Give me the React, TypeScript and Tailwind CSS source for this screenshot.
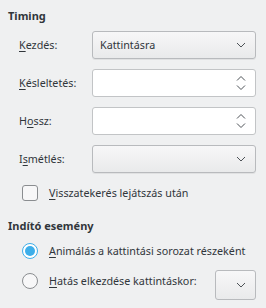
import type { ReactNode } from "react";

function ChevronDown() {
  return (
    <svg width="10" height="6" viewBox="0 0 10 6" fill="none" stroke="#4d5257" strokeWidth="1">
      <path d="M1 1l4 4 4-4" />
    </svg>
  );
}

function SpinArrows() {
  return (
    <svg width="10" height="16" viewBox="0 0 10 16" fill="none" stroke="#4d5257" strokeWidth="1">
      <path d="M1 5.5l4-4 4 4" />
      <path d="M1 10.5l4 4 4-4" />
    </svg>
  );
}

function Mn({ k, rest, pre = "" }: { k: string; rest: string; pre?: string }) {
  return (
    <span>
      {pre}
      <span className="underline underline-offset-2">{k}</span>
      {rest}
    </span>
  );
}

function Row({ label, children }: { label: ReactNode; children: ReactNode }) {
  return (
    <div className="flex h-7 items-center">
      <div className="w-[92px] shrink-0 whitespace-nowrap pl-[19px]">{label}</div>
      {children}
    </div>
  );
}

function Combo({ value = "" }: { value?: string }) {
  return (
    <div className="flex h-7 w-[164px] shrink-0 items-center justify-between rounded-[3px] border border-[#b8babd] bg-gradient-to-b from-[#f7f7f8] to-[#e9eaeb] pl-[7px] pr-[9px] shadow-[0_1px_0_rgba(0,0,0,0.06)]">
      <span>{value}</span>
      <ChevronDown />
    </div>
  );
}

function Spin() {
  return (
    <div className="flex h-7 w-[164px] shrink-0 items-center justify-end rounded-[3px] border border-[#c2c4c6] bg-white pr-[9px]">
      <SpinArrows />
    </div>
  );
}

export default function App() {
  return (
    <div
      className="h-[308px] w-[266px] bg-[#eff0f1] text-[10.75px] text-[#31363b]"
      style={{ fontFamily: '"Noto Sans", sans-serif' }}
    >
      <div className="px-2 pt-[8px] text-[11px] font-bold leading-[16px]">Timing</div>
      <div className="mt-[7px] flex flex-col gap-[10px]">
        <Row label={<Mn k="K" rest="ezdés:" />}>
          <Combo value="Kattintásra" />
        </Row>
        <Row label={<Mn k="K" rest="ésleltetés:" />}>
          <Spin />
        </Row>
        <Row label={<Mn pre="H" k="o" rest="ssz:" />}>
          <Spin />
        </Row>
        <Row label={<Mn pre="I" k="s" rest="métlés:" />}>
          <Combo />
        </Row>
      </div>
      <div className="mt-[12px] flex h-4 items-center pl-[22px]">
        <div className="h-4 w-4 shrink-0 rounded-[3px] border border-[#8a8d90] bg-[#f7f7f8]" />
        <span className="ml-[11px] whitespace-nowrap">
          <Mn k="V" rest="isszatekerés lejátszás után" />
        </span>
      </div>
      <div className="mt-[17px] px-2 text-[11px] font-bold leading-[16px]">Indító esemény</div>
      <div className="mt-[9px] flex h-4 items-center pl-[22px]">
        <div className="flex h-4 w-4 shrink-0 items-center justify-center rounded-full border border-[#3daee9] bg-white">
          <div className="h-[10px] w-[10px] rounded-full bg-[#3daee9]" />
        </div>
        <span className="ml-[11px] whitespace-nowrap">
          <Mn k="A" rest="nimálás a kattintási sorozat részeként" />
        </span>
      </div>
      <div className="mt-[14px] flex items-start pl-[22px]">
        <div className="flex h-4 items-center">
          <div className="h-4 w-4 shrink-0 rounded-full border border-[#8a8d90] bg-[#f7f7f8]" />
          <span className="ml-[11px] whitespace-nowrap">
            <Mn k="H" rest="atás elkezdése kattintáskor:" />
          </span>
        </div>
        <div className="ml-auto mr-[10px] -mt-[3px] flex h-[30px] w-[41px] shrink-0 items-center justify-end rounded-[3px] border border-[#b8babd] bg-gradient-to-b from-[#f7f7f8] to-[#e9eaeb] pr-[9px]">
          <ChevronDown />
        </div>
      </div>
    </div>
  );
}
